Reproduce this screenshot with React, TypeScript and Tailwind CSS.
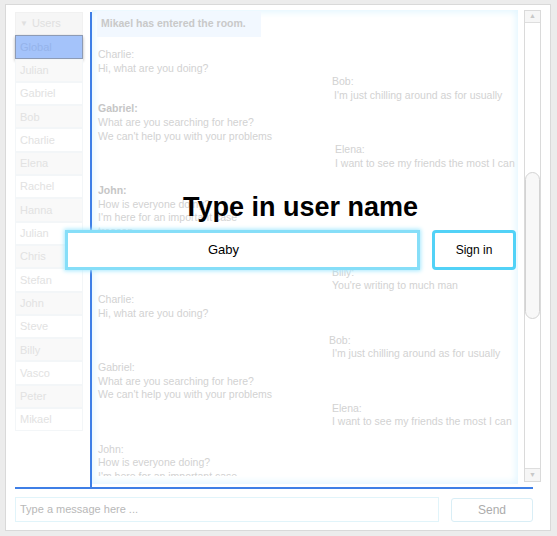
import React from "react";

const users = [
  "Julian", "Gabriel", "Bob", "Charlie", "Elena", "Rachel", "Hanna", "Julian",
  "Chris", "Stefan", "John", "Steve", "Billy", "Vasco", "Peter", "Mikael",
];

type Line = { t: string; x: number; b?: boolean };
const lines: Line[] = [
  { t: "Charlie:", x: 0 },
  { t: "Hi, what are you doing?", x: 0 },
  { t: "Bob:", x: 234 },
  { t: "I'm just chilling around as for usually", x: 236 },
  { t: "Gabriel:", x: 0, b: true },
  { t: "What are you searching for here?", x: 0 },
  { t: "We can't help you with your problems", x: 0 },
  { t: "Elena:", x: 237 },
  { t: "I want to see my friends the most I can", x: 237 },
  { t: "", x: 0 },
  { t: "John:", x: 0, b: true },
  { t: "How is everyone doing?", x: 0 },
  { t: "I'm here for an important case", x: 0 },
  { t: "treason", x: 0 },
  { t: "", x: 0 },
  { t: "", x: 0 },
  { t: "Billy:", x: 234 },
  { t: "You're writing to much man", x: 234 },
  { t: "Charlie:", x: 0 },
  { t: "Hi, what are you doing?", x: 0 },
  { t: "", x: 0 },
  { t: "Bob:", x: 231 },
  { t: "I'm just chilling around as for usually", x: 234 },
  { t: "Gabriel:", x: 0 },
  { t: "What are you searching for here?", x: 0 },
  { t: "We can't help you with your problems", x: 0 },
  { t: "Elena:", x: 234 },
  { t: "I want to see my friends the most I can", x: 234 },
  { t: "", x: 0 },
  { t: "John:", x: 0 },
  { t: "How is everyone doing?", x: 0 },
  { t: "I'm here for an important case", x: 0 },
];

export default function App() {
  return (
    <div
      className="relative w-[557px] h-[536px] bg-[#ececec] overflow-hidden pt-[4px] pl-[5px]"
      style={{ fontFamily: '"Liberation Sans", Arial, sans-serif' }}
    >
      <div className="w-[546px] h-[527px] bg-white border border-[#d9d9d9] flex flex-col pt-[4px] pl-[9px]">
        {/* top row */}
        <div className="flex h-[478px]">
          {/* users */}
          <div className="w-[68px] mt-[3px] flex flex-col">
            <div className="h-[23.3px] bg-[#f6f6f6] border border-[#f1f1f1] text-[11px] text-[#e0e0e0] pl-[4px] flex items-center">
              <span className="text-[8px] mr-[4px]">▼</span>Users
            </div>
            <div className="h-[23.3px] bg-[#a4c3fa] border border-[#8d9bb5] shadow-[0_2px_3px_rgba(0,0,0,0.3)] text-[11px] text-[#95b3ea] pl-[4px] flex items-center">
              Global
            </div>
            {users.map((u, i) => (
              <div
                key={i}
                className={
                  "h-[23.3px] border border-[#f3f6f8] text-[11px] text-[#e2e2e2] pl-[4px] flex items-center " +
                  (i % 2 === 0 ? "bg-[#f9f9f9]" : "bg-white")
                }
              >
                {u}
              </div>
            ))}
          </div>
          {/* vertical blue line */}
          <div className="w-[2px] ml-[7px] mt-[3px] bg-[#3f7fe6]" />
          {/* chat */}
          <div className="w-[426px] h-[474px] mt-[1px] shadow-[inset_0_0_7px_2px_#e2f6ff] bg-white">
            <div className="h-[466px] overflow-hidden pt-[1px] pl-[6px]">
              <div className="ml-[-1px] w-[164px] h-[26px] bg-[#f2f8ff] text-[10.5px] font-bold text-[#c9c9c9] pl-[4px] flex items-center">
                Mikael has entered the room.
              </div>
              <div className="mt-[11px] text-[10.5px] leading-[13.62px] text-[#d2d2d2]">
                {lines.map((l, i) => (
                  <div
                    key={i}
                    className={"h-[13.62px] whitespace-nowrap " + (l.b ? "font-bold text-[#c6c6c6]" : "")}
                    style={{ paddingLeft: l.x }}
                  >
                    {l.t}
                  </div>
                ))}
              </div>
            </div>
          </div>
          {/* scrollbar */}
          <div className="w-[17px] h-[472px] ml-[6px] mt-[1px] border border-[#dadada] bg-white flex flex-col">
            <div className="h-[12px] border-b border-[#dedede] bg-[#f6f6f6] flex items-center justify-center text-[7px] text-[#c8c8c8]">
              ▲
            </div>
            <div className="flex-1 relative">
              <div className="absolute left-0 right-0 top-[149px] h-[147px] rounded-[8px] border border-[#d3d3d3] bg-[#f8f8f8]" />
            </div>
            <div className="h-[13px] border-t border-[#dedede] bg-[#f6f6f6] flex items-center justify-center text-[7px] text-[#c8c8c8]">
              ▼
            </div>
          </div>
        </div>
        {/* horizontal blue line */}
        <div className="w-[518px] h-[2px] bg-[#3f7fe6]" />
        {/* bottom row */}
        <div className="flex mt-[8px]">
          <div className="w-[424px] h-[25px] border border-[#e1f4fa] text-[11px] text-[#b8b8b8] pl-[4px] flex items-center">
            Type a message here ...
          </div>
          <div className="w-[82px] h-[24px] ml-[12px] mt-[1px] border border-[#d9eef6] rounded-[3px] text-[12px] text-[#acacac] flex items-center justify-center">
            Send
          </div>
        </div>
      </div>

      {/* sign in overlay */}
      <div className="absolute left-[65px] top-[192px] w-[451px]">
        <div className="ml-[118px] h-[30px] leading-[30px] text-[27px] font-bold text-black whitespace-nowrap">
          Type in user name
        </div>
        <div className="flex mt-[8px]">
          <div className="w-[355px] h-[40px] bg-white border-[3px] border-[#86def8] shadow-[0_0_4px_1px_#a8eaff] text-[13px] text-black pl-[140px] flex items-center">
            Gaby
          </div>
          <div className="w-[84px] h-[40px] ml-[12px] bg-white border-[3px] border-[#52d2f7] rounded-[4px] text-[12px] text-black flex items-center justify-center">
            Sign in
          </div>
        </div>
      </div>
    </div>
  );
}
